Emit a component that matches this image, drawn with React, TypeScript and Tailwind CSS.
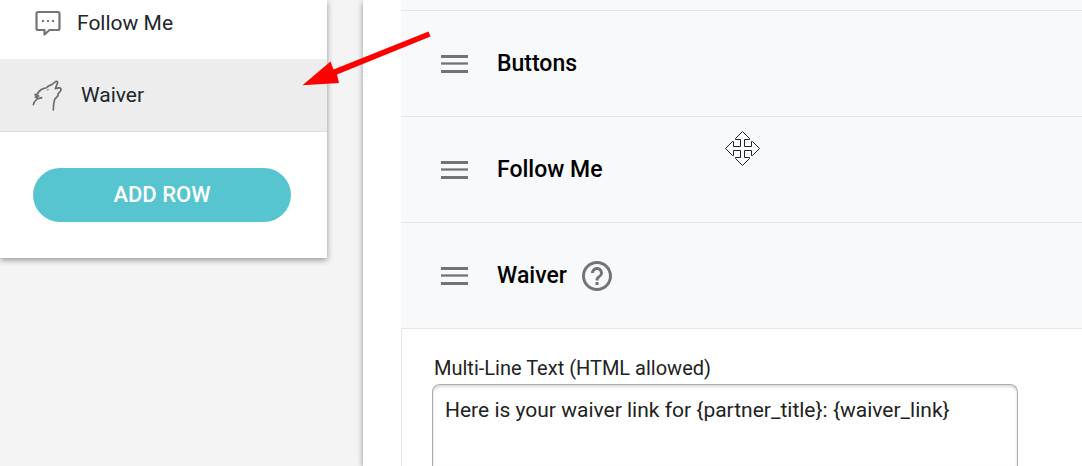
import { useId } from "react";
import type { ReactNode } from "react";

function ChatIcon() {
  return (
    <svg className="size-7 shrink-0" viewBox="0 0 28 28" fill="none" aria-hidden="true">
      <path
        d="M4 3H24a1.500 1.500 0 0 1 1.500 1.500V19.500a1.500 1.500 0 0 1-1.500 1.500H15.500L10.500 25.500V21H4A1.500 1.500 0 0 1 2.500 19.500V4.500A1.500 1.500 0 0 1 4 3z"
        stroke="#757575"
        strokeWidth="2.200"
        strokeLinejoin="round"
      />
      <path d="M8 11h2v2H8zM13 11h2v2h-2zM18 11h2v2h-2z" fill="#757575" />
    </svg>
  );
}

function WolfIcon() {
  return (
    <svg
      className="size-8 shrink-0"
      viewBox="12 9 96 96"
      fill="none"
      stroke="#6c6c6c"
      strokeWidth="5"
      strokeLinecap="round"
      strokeLinejoin="round"
      aria-hidden="true"
    >
      <path d="M16 86Q17 78 27 69" />
      <path d="M41 65L31 68L22 63L32 60L21 56L29 54Q29 49 38 42Q46 36 54 36Q61 29 71 26L84 16Q89 15 89 20L82 38L95 35Q101 38 98 44L90 54L90 59L80 70Q76 82 76 102" />
      <path d="M58 42L61 41" strokeWidth="3" />
    </svg>
  );
}

function DragHandle({ label }: { label: string }) {
  return (
    <button type="button" aria-label={label} className="shrink-0 cursor-move">
      <svg className="block h-5 w-7" viewBox="0 0 28 20" aria-hidden="true">
        <path d="M0 1h27v3H0zM0 16h27v3H0z" fill="#737373" />
        <path d="M0 8h27v1H0zM0 10h27v1H0z" fill="#a3a3a4" />
        <path d="M0 9h27v1H0z" fill="#737373" />
      </svg>
    </button>
  );
}

function HelpIcon() {
  return (
    <svg className="block size-9" viewBox="0 0 24 24" fill="#747474" aria-hidden="true">
      <path d="M11 18h2v-2h-2v2zm1-16C6.480 2 2 6.480 2 12s4.480 10 10 10 10-4.480 10-10S17.520 2 12 2zm0 18c-4.410 0-8-3.590-8-8s3.590-8 8-8 8 3.590 8 8-3.590 8-8 8zm0-14c-2.210 0-4 1.790-4 4h2c0-1.100.9-2 2-2s2 .9 2 2c0 2-3 1.750-3 5h2c0-2.250 3-2.500 3-5 0-2.210-1.790-4-4-4z" />
    </svg>
  );
}

function SectionRow({ title, children }: { title: string; children?: ReactNode }) {
  return (
    <div className="flex h-[106px] shrink-0 items-center border-b border-[#e5e6e8] bg-[#f8f9fb] pl-10">
      <DragHandle label={`Move ${title}`} />
      <h2 className="ml-7 text-[23px] leading-7 font-medium text-black">{title}</h2>
      {children}
    </div>
  );
}

function PointerArrow() {
  return (
    <svg
      className="pointer-events-none absolute top-[30px] left-[300px] h-[60px] w-[132px]"
      viewBox="300 30 132 60"
      aria-hidden="true"
    >
      <path d="M428.500 31.500L430.500 36.500L337 74.500L339 83L302.500 85.300L330.500 61.500L333.500 69.500Z" fill="#fe0000" />
    </svg>
  );
}

function MoveCursor() {
  return (
    <svg
      className="pointer-events-none absolute top-[130px] left-[724px] size-9"
      viewBox="0 0 36 36"
      aria-hidden="true"
    >
      <path
        d="M18.500 1.500L25.500 8.500V9.500H20.500V16.500H27.500V11.500H28.500L35.500 18.500L28.500 25.500H27.500V20.500H20.500V27.500H25.500V28.500L18.500 35.500L11.500 28.500V27.500H16.500V20.500H9.500V25.500H8.500L1.500 18.500L8.500 11.500H9.500V16.500H16.500V9.500H11.500V8.500Z"
        fill="#fff"
        stroke="#22222e"
        strokeWidth="1"
      />
    </svg>
  );
}

export default function App() {
  const textId = useId();
  return (
    <div className="relative flex min-h-screen items-stretch overflow-hidden bg-[#f4f4f4] font-['Roboto',sans-serif]">
      <aside className="w-[327px] shrink-0 self-start bg-white shadow-[0_2px_6px_rgba(0,0,0,0.4)]">
        <nav className="text-[21px] leading-7 text-[#212529]">
          <a href="#follow-me" className="flex h-[59px] items-start pt-[9px] pl-[34px]">
            <ChatIcon />
            <span className="ml-[15px]">Follow Me</span>
          </a>
          <a href="#waiver" className="flex h-[73px] items-center border-b border-[#dcdcdc] bg-[#ededed] pl-8">
            <WolfIcon />
            <span className="ml-[17px]">Waiver</span>
          </a>
        </nav>
        <div className="px-9 py-9 pl-[33px]">
          <button
            type="button"
            className="block h-[54px] w-full rounded-full bg-[#57c5d0] text-[22px] leading-7 font-medium text-white"
          >
            ADD ROW
          </button>
        </div>
      </aside>

      <main className="ml-9 flex min-w-0 grow flex-col bg-white pl-[38px] shadow-[0_2px_6px_rgba(0,0,0,0.4)]">
        <div className="h-[11px] shrink-0 border-b border-[#e5e6e8] bg-[#f8f9fb]" />
        <SectionRow title="Buttons" />
        <SectionRow title="Follow Me" />
        <SectionRow title="Waiver">
          <button type="button" aria-label="About Waiver" className="ml-3">
            <HelpIcon />
          </button>
        </SectionRow>
        <div className="flex grow flex-col border-l border-[#e5e6e8] pt-[25px] pr-16 pl-[30px]">
          <label htmlFor={textId} className="block pl-0.5 text-xl leading-7 text-[#222]">
            Multi-Line Text (HTML allowed)
          </label>
          <textarea
            id={textId}
            rows={2}
            defaultValue="Here is your waiver link for {partner_title}: {waiver_link}"
            className="mt-0.5 block w-full grow resize-none rounded-t-lg border border-b-0 border-[#aaa] bg-white px-3 pt-[11px] text-[21px] leading-7 text-[#222] shadow-[inset_0_2px_3px_rgba(0,0,0,0.15)] outline-none"
          />
        </div>
      </main>

      <PointerArrow />
      <MoveCursor />
    </div>
  );
}
